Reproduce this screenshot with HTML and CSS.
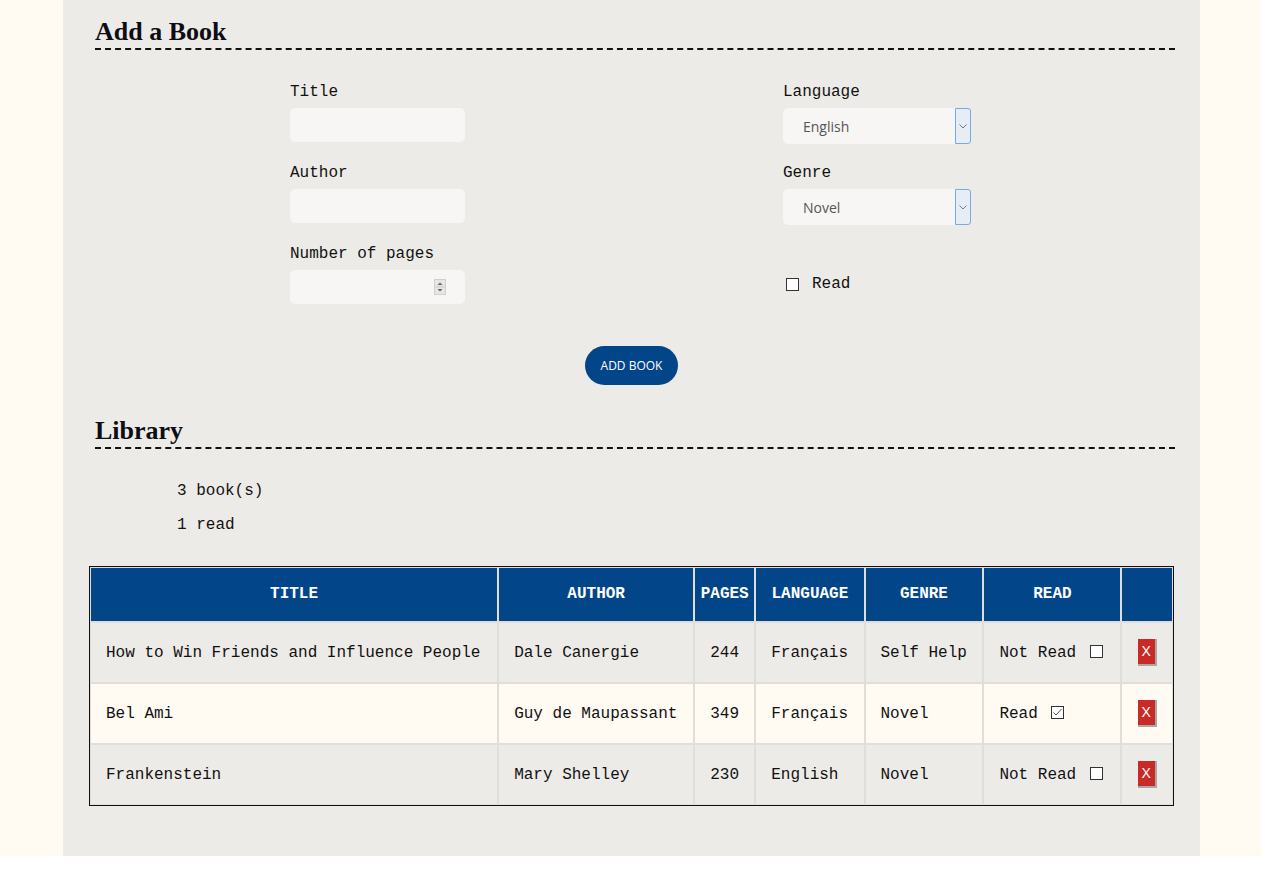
FILE: index.html
```html
<!DOCTYPE html>
<html lang="en">
<head>
<meta charset="utf-8">
<title>Library</title>
<link rel="stylesheet" href="styles.css">
</head>
<body>
<main class="page">
  <section class="add-book">
    <h2 class="section-title">Add a Book</h2>
    <form class="book-form">
      <div class="form-grid">
        <div class="field">
          <label class="field-label" for="title">Title</label>
          <input class="text-input" id="title" type="text">
        </div>
        <div class="field">
          <label class="field-label" for="language">Language</label>
          <div class="select-wrap">
            <select class="select-input" id="language">
              <option>English</option>
              <option>Français</option>
            </select>
            <span class="select-btn"><svg width="8" height="5" viewBox="0 0 8 5"><path d="M0.5 0.5 L4 4 L7.5 0.5" fill="none" stroke="#777" stroke-width="1"/></svg></span>
          </div>
        </div>
        <div class="field">
          <label class="field-label" for="author">Author</label>
          <input class="text-input" id="author" type="text">
        </div>
        <div class="field">
          <label class="field-label" for="genre">Genre</label>
          <div class="select-wrap">
            <select class="select-input" id="genre">
              <option>Novel</option>
              <option>Self Help</option>
            </select>
            <span class="select-btn"><svg width="8" height="5" viewBox="0 0 8 5"><path d="M0.5 0.5 L4 4 L7.5 0.5" fill="none" stroke="#777" stroke-width="1"/></svg></span>
          </div>
        </div>
        <div class="field">
          <label class="field-label" for="pages">Number of pages</label>
          <div class="number-wrap">
            <input class="text-input" id="pages" type="number">
            <span class="spinner"><svg width="12" height="16" viewBox="0 0 12 16"><rect x="0.5" y="0.5" width="11" height="15" fill="#e6e6e6" stroke="#cfcfcf"/><line x1="1" y1="8" x2="11" y2="8" stroke="#cfcfcf"/><path d="M3.5 6 L6 3.5 L8.5 6 Z" fill="#666"/><path d="M3.5 10 L6 12.5 L8.5 10 Z" fill="#666"/></svg></span>
          </div>
        </div>
        <div class="field field-check">
          <label class="check-label"><span class="check-box"></span><span>Read</span></label>
        </div>
      </div>
      <div class="form-actions">
        <button class="btn-add" type="button">ADD BOOK</button>
      </div>
    </form>
  </section>

  <section class="library">
    <h2 class="section-title">Library</h2>
    <div class="stats">
      <p>3 book(s)</p>
      <p>1 read</p>
    </div>
    <table class="books">
      <thead>
        <tr>
          <th>TITLE</th>
          <th>AUTHOR</th>
          <th>PAGES</th>
          <th>LANGUAGE</th>
          <th>GENRE</th>
          <th>READ</th>
          <th></th>
        </tr>
      </thead>
      <tbody>
        <tr class="row-odd">
          <td>How to Win Friends and Influence People</td>
          <td>Dale Canergie</td>
          <td>244</td>
          <td>Français</td>
          <td>Self Help</td>
          <td>Not Read <span class="check-box check-small"></span></td>
          <td><button class="btn-del" type="button">X</button></td>
        </tr>
        <tr class="row-even">
          <td>Bel Ami</td>
          <td>Guy de Maupassant</td>
          <td>349</td>
          <td>Français</td>
          <td>Novel</td>
          <td>Read <span class="check-box check-small"><svg width="11" height="11" viewBox="0 0 11 11"><path d="M1.5 5.5 L4 8 L9.5 2" fill="none" stroke="#555" stroke-width="1"/></svg></span></td>
          <td><button class="btn-del" type="button">X</button></td>
        </tr>
        <tr class="row-odd">
          <td>Frankenstein</td>
          <td>Mary Shelley</td>
          <td>230</td>
          <td>English</td>
          <td>Novel</td>
          <td>Not Read <span class="check-box check-small"></span></td>
          <td><button class="btn-del" type="button">X</button></td>
        </tr>
      </tbody>
    </table>
  </section>
</main>
</body>
</html>
```

FILE: styles.css
```css
html {
  background: #ffffff;
}

body {
  margin: 0;
  background: #fffbf3;
  font-family: "Liberation Mono", "Courier New", monospace;
  font-size: 16px;
  color: #111;
}

.page {
  width: 1137px;
  margin: 0 0 0 calc(50% - 567.5px);
  box-sizing: border-box;
  padding: 17px 26px 50px;
  background: #edebe7;
}

.section-title {
  margin: 0 -1px 0 6px;
  padding-bottom: 1px;
  font-family: "Liberation Serif", "Times New Roman", serif;
  font-weight: bold;
  font-size: 26px;
  line-height: 30px;
  color: #0d0d14;
  border-bottom: 2px dashed #111;
}

.form-grid {
  display: grid;
  grid-template-columns: 493px 188px;
  row-gap: 18px;
  width: 681px;
  margin: 31px 0 0 201px;
}

.field {
  display: flex;
  flex-direction: column;
  align-items: flex-start;
}

.field-label {
  display: block;
  line-height: 22px;
  margin-bottom: 5px;
}

.text-input {
  width: 175px;
  height: 34px;
  box-sizing: border-box;
  border: none;
  border-radius: 5px;
  background: #f7f6f4;
  padding: 0 10px;
  font-family: inherit;
  font-size: 16px;
}

.text-input::-webkit-inner-spin-button,
.text-input::-webkit-outer-spin-button {
  -webkit-appearance: none;
  margin: 0;
}

.number-wrap {
  position: relative;
}

.spinner {
  position: absolute;
  right: 19px;
  top: 9px;
  width: 12px;
  height: 16px;
  display: block;
}

.spinner svg {
  display: block;
}

.select-wrap {
  position: relative;
  width: 188px;
  height: 36px;
}

.select-input {
  -webkit-appearance: none;
  appearance: none;
  width: 188px;
  height: 36px;
  box-sizing: border-box;
  border: none;
  border-radius: 5px;
  background: #f7f6f4;
  padding: 0 0 0 20px;
  font-family: "Open Sans", "Noto Sans", sans-serif;
  font-size: 14px;
  color: #555;
}

.select-btn {
  position: absolute;
  right: 0;
  top: 0;
  width: 16px;
  height: 36px;
  box-sizing: border-box;
  border: 1px solid #7aa9dc;
  border-radius: 0 3px 3px 0;
  background: #e6edf5;
  display: flex;
  align-items: center;
  justify-content: center;
}

.select-btn svg {
  display: block;
}

.field-check {
  align-self: end;
  margin-bottom: 10px;
  padding-left: 3px;
}

.check-label {
  display: flex;
  align-items: center;
  gap: 13px;
  line-height: 20px;
}

.check-box {
  display: inline-block;
  width: 13px;
  height: 13px;
  box-sizing: border-box;
  border: 1px solid #333;
  background: #fff;
  position: relative;
}

.check-box svg {
  position: absolute;
  left: 0;
  top: 0;
}

.check-small {
  margin-left: 4px;
  margin-right: 2px;
  vertical-align: -1px;
}

.form-actions {
  text-align: center;
  margin-top: 42px;
}

.btn-add {
  height: 39px;
  padding: 0 16px;
  border: none;
  border-radius: 20px;
  background: #034589;
  color: #fff;
  font-family: "Open Sans", "Noto Sans", sans-serif;
  font-size: 12px;
}

.library {
  margin-top: 31px;
}

.stats {
  margin: 33px 0 0 88px;
}

.stats p {
  margin: 0 0 16px;
  line-height: 18px;
}

.stats p:last-child {
  margin-bottom: 0;
}

.books {
  width: 100%;
  margin-top: 32px;
  border: 1px solid #111;
  border-collapse: separate;
  border-spacing: 0;
}

.books th,
.books td {
  border: 1px solid #e0ded9;
  white-space: nowrap;
}

.books th {
  background: #034589;
  color: #fff;
  font-weight: bold;
  font-size: 16px;
  line-height: 18px;
  padding: 17px 5px 18px;
  text-align: center;
}

.books td {
  padding: 16px 15px;
  line-height: 18px;
  text-align: left;
  vertical-align: middle;
}

.row-odd td {
  background: #edebe7;
}

.row-even td {
  background: #fffbf3;
}

.btn-del {
  display: block;
  margin: 0 auto;
  padding: 4px 4px 5px 4px;
  border: none;
  border-right: 2px solid #a8a8a8;
  border-bottom: 2px solid #a8a8a8;
  background: #c82a26;
  color: #fff;
  font-family: "Liberation Sans", Arial, sans-serif;
  font-size: 14px;
  line-height: 16px;
}
```
